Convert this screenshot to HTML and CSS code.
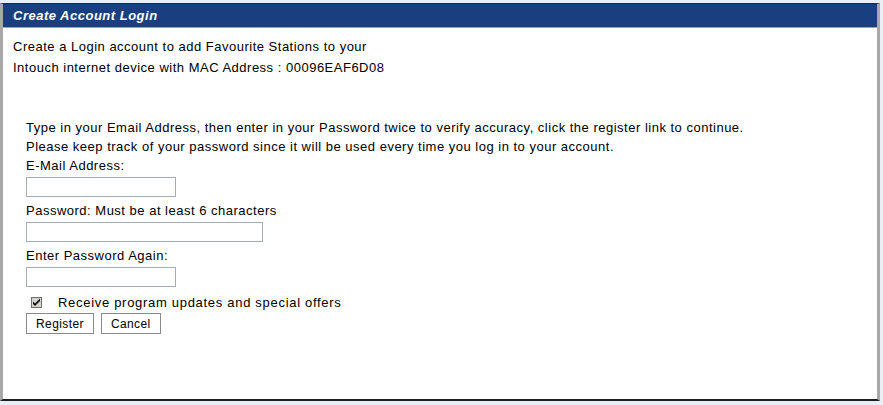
FILE: index.html
```html
<!DOCTYPE html>
<html lang="en">
<head>
    <meta charset="UTF-8">
    <title>Create Account Login</title>
    <link rel="stylesheet" href="styles.css">
</head>
<body>

    <div class="frame">
        <div class="header">Create Account Login</div>

        <div class="intro">
            <p>Create a Login account to add Favourite Stations to your</p>
            <p>Intouch internet device with MAC Address : 00096EAF6D08</p>
        </div>

        <form class="register">
            <p>Type in your Email Address, then enter in your Password twice to verify accuracy, click the register link to continue.</p>
            <p>Please keep track of your password since it will be used every time you log in to your account.</p>

            <label class="lbl">E-Mail Address:</label>
            <input type="text" class="field short">

            <label class="lbl">Password: Must be at least 6 characters</label>
            <input type="password" class="field long">

            <label class="lbl">Enter Password Again:</label>
            <input type="password" class="field short">

            <div class="check">
                <span class="box">
                    <svg width="9" height="9" viewBox="0 0 9 9"><path d="M1 3.5 L3 5.5 L8 0.5 L8 3 L3 8 L1 6 Z" fill="#111"/></svg>
                </span>
                <span class="check-text">Receive program updates and special offers</span>
            </div>

            <div class="buttons">
                <button type="button" class="btn">Register</button>
                <button type="button" class="btn">Cancel</button>
            </div>
        </form>
    </div>

</body>
</html>
```

FILE: styles.css
```css
* {
    margin: 0;
    padding: 0;
    box-sizing: border-box;
}

body {
    background-color: #e9eef7;
    font-family: "Liberation Sans", Arial, sans-serif;
    font-size: 13px;
    letter-spacing: 0.5px;
    color: #000;
}

/* cornice della finestra */
.frame {
    margin: 3px 3px 0 0;
    height: 398px;
    background: #fff;
    border-top: 1px solid #2b2b2b;
    border-bottom: 2px solid #1f1f1f;
    border-left: 3px solid #a8a8a8;
    border-right: 3px solid #a8a8a8;
}

.header {
    height: 24px;
    line-height: 23px;
    padding-left: 10px;
    background: #1a3f80;
    border-bottom: 1px solid #9aa3b0;
    color: #fff;
    font-weight: bold;
    font-style: italic;
}

.intro {
    padding: 8px 0 0 10px;
}

.intro p {
    line-height: 21px;
}

.register {
    padding: 40px 0 0 23px;
    display: flex;
    flex-direction: column;
    align-items: flex-start;
}

.register p,
.lbl {
    line-height: 19px;
}

.field {
    height: 20px;
    border: 1px solid #a5acb5;
    background: #fff;
    margin: 2px 0 4px;
}

.short {
    width: 150px;
}

.long {
    width: 237px;
}

.check {
    display: flex;
    align-items: center;
    gap: 16px;
    margin: 2px 0 0 5px;
    height: 18px;
}

.check-text {
    letter-spacing: 0.7px;
}

.box {
    width: 11px;
    height: 11px;
    border: 1px solid #6f6f6f;
    background: #d6d3cc;
    display: flex;
    align-items: center;
    justify-content: center;
}

.buttons {
    display: flex;
    gap: 7px;
    margin-top: 2px;
}

.btn {
    height: 21px;
    padding: 0 9px;
    background: #fff;
    border: 1px solid #8a8a8a;
    font-family: "Liberation Sans", Arial, sans-serif;
    font-size: 12px;
    letter-spacing: 0.4px;
    color: #000;
}
```
